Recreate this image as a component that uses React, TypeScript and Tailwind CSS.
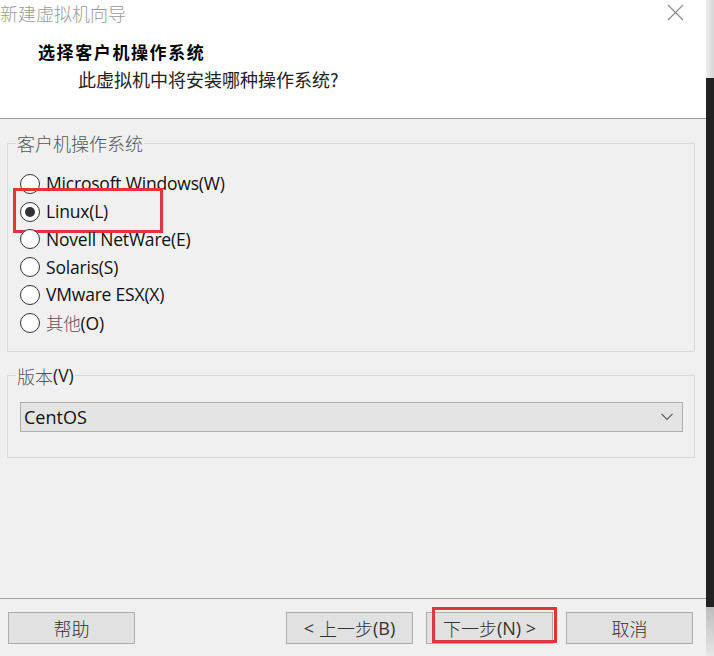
import React from "react";

const LAT = { fontFamily: '"Open Sans", "Noto Sans CJK SC", sans-serif' };
const CJK = { fontFamily: '"Noto Sans CJK SC", "Open Sans", sans-serif' };

const options: React.ReactNode[] = [
  "Microsoft Windows(W)",
  "Linux(L)",
  "Novell NetWare(E)",
  "Solaris(S)",
  "VMware ESX(X)",
  <>
    <span style={CJK} className="font-light text-[#555555]">其他</span>
    <span>(O)</span>
  </>,
];

function Radio({ checked }: { checked: boolean }) {
  return (
    <span className="flex h-[20px] w-[20px] shrink-0 items-center justify-center rounded-full border border-[#333333] bg-white">
      {checked && <span className="h-[10px] w-[10px] rounded-full bg-[#333333]" />}
    </span>
  );
}

function Btn({ children, highlight }: { children: React.ReactNode; highlight?: boolean }) {
  return (
    <div className="relative">
      <button
        className="flex h-[32px] w-[127px] items-center justify-center border border-[#adadad] bg-[#e1e1e1] text-[18px] leading-none text-[#333333]"
        style={LAT}
      >
        {children}
      </button>
      {highlight && (
        <div className="pointer-events-none absolute left-[6px] top-[-5px] h-[36px] w-[125px] border-[3px] border-[#e2353b]" />
      )}
    </div>
  );
}

export default function App() {
  return (
    <div className="flex h-[656px] w-[714px] overflow-hidden bg-[#f0f0f0]">
      <div className="flex w-[706px] flex-col">
        {/* header */}
        <div className="h-[119px] shrink-0 border-b border-[#a0a0a0] bg-white">
          <div className="flex h-[26px] items-center justify-between pr-[22px]">
            <span className="text-[18px] font-light leading-none text-[#9a9a9a]" style={CJK}>
              新建虚拟机向导
            </span>
            <svg width="17" height="17" viewBox="0 0 17 17" className="mt-[-1px]">
              <path d="M1 1 L16 16 M16 1 L1 16" stroke="#8a8a8a" strokeWidth="1.1" fill="none" />
            </svg>
          </div>
          <div
            className="mt-[14px] pl-[38px] text-[17px] font-bold leading-[24px] tracking-[1.6px] text-black"
            style={CJK}
          >
            选择客户机操作系统
          </div>
          <div className="mt-[3px] pl-[78px] text-[18px] leading-[24px] text-[#222222]" style={CJK}>
            此虚拟机中将安装哪种操作系统?
          </div>
        </div>

        {/* body */}
        <div className="flex flex-1 flex-col pl-[7px] pr-[11px] pt-[12px]">
          <fieldset className="border border-[#d9d9d9] p-0">
            <legend className="ml-[8px] px-[1px] text-[18px] font-light leading-[24px] text-[#555555]" style={CJK}>
              客户机操作系统
            </legend>
            <div className="pb-[14px] pl-[12px] pt-[15px]">
              {options.map((o, i) => (
                <div key={i} className="relative flex h-[27.8px] items-center gap-[6px]">
                  <Radio checked={i === 1} />
                  <span className="text-[17.5px] leading-none tracking-[-0.2px] text-[#111111]" style={LAT}>
                    {o}
                  </span>
                  {i === 1 && (
                    <div className="pointer-events-none absolute left-[-7px] top-[-10px] h-[45px] w-[150px] border-[3px] border-[#e2353b]" />
                  )}
                </div>
              ))}
            </div>
          </fieldset>

          <fieldset className="mt-[12px] border border-[#d9d9d9] p-0">
            <legend className="ml-[8px] flex h-[24px] items-center px-[1px] text-[18px] leading-none">
              <span style={CJK} className="font-light text-[#555555]">版本</span>
              <span style={LAT} className="text-[17.5px] text-[#222222]">(V)</span>
            </legend>
            <div className="pb-[25px] pl-[12px] pr-[11px] pt-[14px]">
              <div className="flex h-[30px] items-center justify-between border border-[#adadad] bg-[#e4e4e4] pl-[3px] pr-[9px]">
                <span className="text-[18px] leading-none text-[#111111]" style={LAT}>
                  CentOS
                </span>
                <svg width="12" height="8" viewBox="0 0 12 8">
                  <path d="M0.5 0.8 L6 6.5 L11.5 0.8" stroke="#555555" strokeWidth="1.1" fill="none" />
                </svg>
              </div>
            </div>
          </fieldset>
        </div>

        {/* footer */}
        <div className="flex h-[58px] shrink-0 items-start justify-between border-t border-[#a0a0a0] pl-[8px] pr-[13px] pt-[13px]">
          <Btn>
            <span style={CJK} className="font-light">帮助</span>
          </Btn>
          <div className="flex gap-[13px]">
            <Btn>
              <span>&lt; </span>
              <span style={CJK} className="ml-[5px] font-light">上一步</span>
              <span>(B)</span>
            </Btn>
            <Btn highlight>
              <span style={CJK} className="font-light">下一步</span>
              <span>(N) &gt;</span>
            </Btn>
            <Btn>
              <span style={CJK} className="font-light">取消</span>
            </Btn>
          </div>
        </div>
      </div>

      {/* right edge strip */}
      <div className="flex w-[8px] flex-col">
        <div className="h-[78px] bg-linear-to-r from-[#eeeeee] to-[#d6d6d6]" />
        <div className="flex-1 bg-[#222222]" />
        <div className="h-[49px] bg-linear-to-b from-[#bdbdbd] to-[#e6e6e6]" />
      </div>
    </div>
  );
}
